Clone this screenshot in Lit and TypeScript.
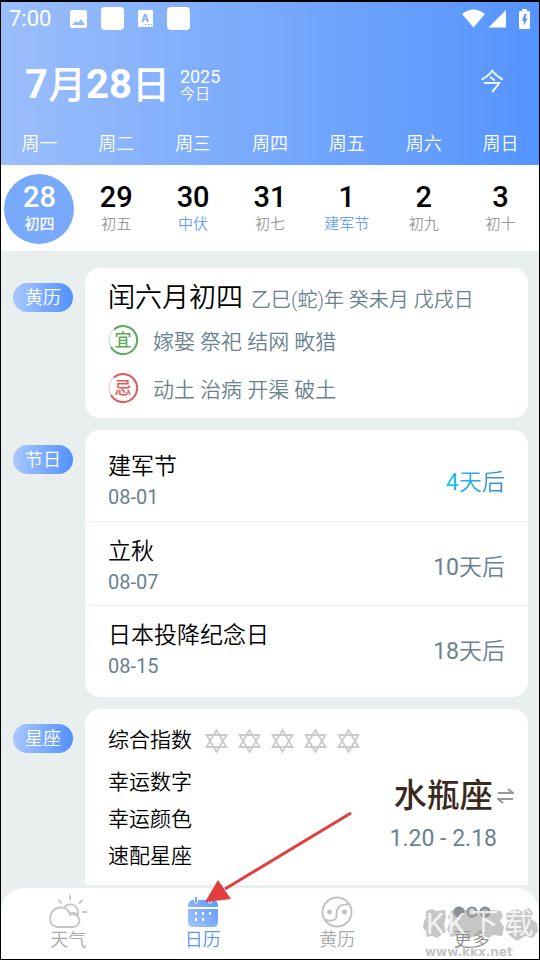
import { LitElement, html, css, svg } from "lit";
import { customElement } from "lit/decorators.js";
import { classMap } from "lit/directives/class-map.js";

interface Day { week: string; num: string; lunar: string; mark?: boolean; selected?: boolean }

const DAYS: Day[] = [
  { week: "周一", num: "28", lunar: "初四", selected: true },
  { week: "周二", num: "29", lunar: "初五" },
  { week: "周三", num: "30", lunar: "中伏", mark: true },
  { week: "周四", num: "31", lunar: "初七" },
  { week: "周五", num: "1", lunar: "建军节", mark: true },
  { week: "周六", num: "2", lunar: "初九" },
  { week: "周日", num: "3", lunar: "初十" },
];

const FESTIVALS = [
  { name: "建军节", date: "08-01", days: 4 },
  { name: "立秋", date: "08-07", days: 10 },
  { name: "日本投降纪念日", date: "08-15", days: 18 },
];

const base = css`
  :host {
    box-sizing: border-box;
    font-family: Roboto, "Noto Sans CJK SC", sans-serif;
    font-weight: 350;
  }
  * { box-sizing: border-box; }
  svg { display: block; }
  h1, h2, h3, p, ul { margin: 0; padding: 0; font-weight: inherit; }
  button {
    border: 0; padding: 0; background: none; color: inherit;
    font-family: inherit; font-weight: inherit; cursor: pointer;
  }
`;

@customElement("status-bar")
export class StatusBar extends LitElement {
  static styles = [base, css`
    :host { display: flex; align-items: center; height: 33px; padding: 0 9px 0 8px; color: #fff; }
    .time { font-size: 22px; line-height: 32px; width: 61px; font-weight: 400; }
    .left { display: flex; align-items: center; flex: 1; gap: 14px; }
    .app { width: 23px; height: 23px; border-radius: 4px; background: #fff; }
    .right { display: flex; align-items: center; }
    .battery { margin-left: 12px; }
  `];
  render() {
    return html`
      <span class="time">7:00</span>
      <div class="left">
        <svg width="17" height="18" viewBox="0 0 17 18"><path fill="#fff" fill-rule="evenodd" d="M2 0H15Q17 0 17 2V16Q17 18 15 18H2Q0 18 0 16V2Q0 0 2 0ZM2 15H15L11 9L8 13L6 11Z"/></svg>
        <span class="app"></span>
        <svg width="15" height="17" viewBox="0 0 15 17"><path fill="#fff" fill-rule="evenodd" d="M1 0H14Q15 0 15 1V16Q15 17 14 17H1Q0 17 0 16V1Q0 0 1 0ZM6 4L3.500 12H5.500L6 10H8.500L9 12H11L8.500 4ZM6.500 8.500L7.200 6L8 8.500ZM7 14V15.200H8.500V14ZM10 14V15.200H11.500V14ZM13 14V15.200H14.200V14Z"/></svg>
        <span class="app"></span>
      </div>
      <div class="right">
        <svg width="23" height="19" viewBox="0 0 23 19"><path fill="#fff" d="M0 5Q11.500 -4 23 5L11.500 18.500Z"/></svg>
        <svg width="22" height="19" viewBox="0 0 22 19"><path fill="#fff" d="M21 1V18.500H3.500Z"/></svg>
        <svg class="battery" width="11" height="20" viewBox="0 0 11 20"><path fill="#fff" fill-rule="evenodd" d="M3 0H8V2H10Q11 2 11 3V19Q11 20 10 20H1Q0 20 0 19V3Q0 2 1 2H3ZM5.500 5L3 12H5L4.500 17L8.500 9.500H6.500L7.500 5Z"/></svg>
      </div>`;
  }
}

@customElement("calendar-head")
export class CalendarHead extends LitElement {
  static styles = [base, css`
    :host { display: block; }
    .top { background: linear-gradient(90deg, #9bbefb, #76a8fc 52%, #5594fe); color: #fff; }
    .title { display: flex; align-items: center; height: 96px; padding: 4px 35px 0 24px; }
    h1 { font-size: 40px; line-height: 48px; font-weight: 700; }
    .cjk { font-size: 38px; font-weight: 500; }
    .year { flex: 1; padding-left: 10px; font-size: 18px; line-height: 18px; font-weight: 400; }
    .year small { display: block; font-size: 15px; line-height: 16px; font-weight: 350; }
    .today { font-size: 24px; line-height: 32px; margin-bottom: 6px; }
    .week { display: grid; grid-template-columns: repeat(7, 1fr); padding-bottom: 8px; }
    .week span { text-align: center; font-size: 18px; line-height: 26px; }
    .strip { display: grid; grid-template-columns: repeat(7, 1fr); padding: 9px 0 7px; background: #fff; }
    .day {
      justify-self: center; width: 70px; height: 70px; border-radius: 35px;
      display: flex; flex-direction: column; align-items: center; padding-top: 6px;
    }
    .num { font-size: 29px; line-height: 34px; font-weight: 500; }
    .lunar { font-size: 15px; line-height: 20px; color: #9a9a9a; }
    .mark .lunar { color: #6aa0fc; }
    .selected { background: #78a9fa; color: #fff; }
    .selected .lunar { color: #fff; font-weight: 500; }
  `];
  render() {
    return html`
      <div class="top">
        <status-bar></status-bar>
        <div class="title">
          <h1>7<span class="cjk">月</span>28<span class="cjk">日</span></h1>
          <p class="year">2025<small>今日</small></p>
          <button class="today">今</button>
        </div>
        <div class="week">${DAYS.map((d) => html`<span>${d.week}</span>`)}</div>
      </div>
      <div class="strip">
        ${DAYS.map((d) => html`
          <button class=${classMap({ day: true, mark: !!d.mark, selected: !!d.selected })}>
            <span class="num">${d.num}</span><span class="lunar">${d.lunar}</span>
          </button>`)}
      </div>`;
  }
}

@customElement("info-section")
export class InfoSection extends LitElement {
  static properties = { label: { type: String } };
  declare label: string;
  static styles = [base, css`
    :host { display: grid; grid-template-columns: 60px 1fr; column-gap: 12px; align-items: start; }
    h2 {
      margin-top: 15px; border-radius: 15px; text-align: center; color: #fff;
      font-size: 18px; line-height: 29px;
      background: linear-gradient(90deg, #a9c8fe, #5290fd);
    }
    .card { background: #fff; border-radius: 15px; }
  `];
  render() {
    return html`<h2>${this.label}</h2><div class="card"><slot></slot></div>`;
  }
}

@customElement("tab-bar")
export class TabBar extends LitElement {
  static styles = [base, css`
    :host {
      display: grid; grid-template-columns: repeat(4, 1fr); height: 71px;
      background: #fff; border-radius: 24px 24px 0 0;
    }
    button {
      display: flex; flex-direction: column; align-items: center; padding-top: 6px;
      font-size: 18px; line-height: 24px; color: #aaa;
    }
    .on { color: #5b95fb; }
    .more { color: #8c8c8c; }
  `];
  render() {
    return html`
      <button>
        <svg width="40" height="34" viewBox="0 0 40 34" fill="none" stroke="#c4c4c4" stroke-width="1.800" stroke-linecap="round">
          <path d="M9 33Q2 32 2 24Q3 14.500 12 13.500Q19.500 13 22 20.500Q30 19 31.500 26Q31.500 32 25 33Z"/>
          <path d="M16.500 13.500Q19 10 24 10.500Q31 12.500 30 21.500M22 20.500Q24.500 17 29 20"/>
          <path d="M22 1.500V5M11 6.500L13 9M34 6.500L31.500 9M35 18H38.500"/>
        </svg>天气
      </button>
      <button class="on">
        <svg width="32" height="34" viewBox="0 0 32 34">
          <defs><linearGradient id="g" x1="0" y1="1" x2="1" y2="0"><stop offset="0" stop-color="#a6c6ff"/><stop offset="1" stop-color="#5794fd"/></linearGradient></defs>
          <path fill="url(#g)" d="M1 15H31V28Q31 33 26 33H6Q1 33 1 28ZM1 13Q1 6 6 6H7V8Q9 12 11 8V6H21V8Q23 12 25 8V6H26Q31 6 31 13ZM8 3H10V9H8ZM22 3H24V9H22Z"/>
          <path fill="#fff" d="M8 18h2v3h-2zM15 18h2v3h-2zM22 18h2v3h-2zM8 24h2v3h-2zM15 24h2v3h-2z"/>
        </svg>日历
      </button>
      <button>
        <svg width="32" height="34" viewBox="0 0 32 34" fill="none" stroke="#bfbfbf" stroke-width="1.800">
          <circle cx="16" cy="18" r="14.500"/>
          <path d="M4.500 25.500Q8 27 11 26.500C18 25.500 14.500 20 16 16Q18 10 27.500 10.500"/>
          <circle cx="8.500" cy="18" r="2.400" fill="#bfbfbf" stroke="none"/><circle cx="23.500" cy="18" r="2.400" fill="#bfbfbf" stroke="none"/>
        </svg>黄历
      </button>
      <button class="more">
        <svg width="40" height="34" viewBox="0 0 40 34" fill="none" stroke="#7f878f" stroke-width="2">
          <circle cx="7" cy="18" r="4.500" fill="#80878e"/><circle cx="20" cy="18" r="4.500"/><circle cx="33" cy="18" r="4.500" fill="#a4a9ae"/>
          <path d="M25 18H29"/>
        </svg>更多
      </button>`;
  }
}

const star = svg`<svg width="25" height="26" viewBox="0 0 25 26" fill="none" stroke="#cbcbcb" stroke-width="1.800"><path d="M12.500 2L22.500 19H2.500ZM12.500 24L2.500 7H22.500Z"/></svg>`;

@customElement("app-root")
export class AppRoot extends LitElement {
  static styles = [base, css`
    :host {
      display: flex; flex-direction: column; position: relative; height: 100vh; overflow: hidden;
      background: #e9eeee; color: #000;
      border: 1px solid #000; border-top-width: 2px;
    }
    calendar-head, tab-bar { flex: none; }
    main {
      flex: 1; min-height: 0; overflow-y: auto; scrollbar-width: none;
      display: flex; flex-direction: column; gap: 12px;
      padding: 17px 11px 0 12px; margin-bottom: 3px;
    }
    info-section { flex: none; }
    .almanac { padding: 12px 23px 6px; }
    .lunar { display: flex; align-items: baseline; gap: 8px; }
    .lunar h3 { font-size: 27px; line-height: 36px; }
    .lunar p { font-size: 20px; color: #6a8290; }
    .row { display: flex; align-items: center; gap: 15px; height: 48px; font-size: 21px; color: #6a8290; }
    .seal { display: grid; place-items: center; width: 30px; height: 30px; flex: none; font-size: 17px; line-height: 28px; font-weight: 500; }
    .seal > * { grid-area: 1 / 1; }
    .good { color: #5fa95c; }
    .bad { color: #e05a5c; }
    ul { list-style: none; padding: 7px 0 8px; }
    li { display: flex; align-items: center; height: 84px; padding: 0 23px; }
    li + li { border-top: 1px solid #f0f0f0; }
    .event { flex: 1; padding-top: 4px; }
    .event h3 { font-size: 23px; line-height: 32px; }
    .event p { font-size: 20px; line-height: 28px; font-weight: 400; color: #6a8290; }
    .left { font-size: 23px; padding-top: 2px; color: #6a8290; }
    .count, .range { font-weight: 400; }
    .soon { color: transparent; background: linear-gradient(90deg, #14c4f5, #4286d8); background-clip: text; }
    .zodiac { display: flex; justify-content: space-between; padding: 13px 14px 40px 23px; }
    .zodiac p { font-size: 21px; line-height: 37px; }
    .score { display: flex; align-items: center; gap: 12px; margin-bottom: 5px; }
    .stars { display: flex; gap: 8px; }
    .sign {
      display: grid; grid-template-columns: auto auto; align-items: center; align-content: start;
      justify-items: center; padding-top: 50px; color: #6a8290;
    }
    .name { font-size: 33px; line-height: 48px; color: #3a2a1c; font-weight: 500; }
    .range { font-size: 23px; line-height: 38px; }
    .arrow { position: absolute; left: 202px; bottom: 56px; pointer-events: none; }
    .watermark { position: absolute; right: 0; bottom: 0; width: 116px; pointer-events: none; }
    .blobs { opacity: 0.55; }
    .brand {
      position: absolute; inset: 0; display: flex; padding-left: 3px;
      font-size: 29px; line-height: 34px; font-weight: 400; color: rgba(255, 255, 255, 0.8);
    }
    .brand span:nth-child(2) { margin-left: 3px; }
    .brand span:nth-child(3) { margin-left: 4px; }
    .brand span:nth-child(4) { margin-left: 6px; }
    .url {
      font-family: "DejaVu Sans", sans-serif; font-weight: 700; font-size: 12px; line-height: 14px;
      color: #c4c4c4; padding-left: 2px;
    }
  `];

  private seal(tone: string, text: string) {
    return html`<span class="seal ${tone}">
      <svg width="30" height="30" viewBox="0 0 30 30" fill="none" stroke="currentColor">
        <circle cx="15" cy="15" r="14" stroke-width="1.200" opacity="0.35"/>
        <path d="M6 4.500A14 14 0 1 1 3 22" stroke-width="2"/>
      </svg><span>${text}</span></span>`;
  }

  render() {
    return html`
      <calendar-head></calendar-head>
      <main>
        <info-section label="黄历">
          <div class="almanac">
            <div class="lunar"><h3>闰六月初四</h3><p>乙巳(蛇)年 癸未月 戊戌日</p></div>
            <div class="row">${this.seal("good", "宜")}嫁娶 祭祀 结网 畋猎</div>
            <div class="row">${this.seal("bad", "忌")}动土 治病 开渠 破土</div>
          </div>
        </info-section>
        <info-section label="节日">
          <ul>${FESTIVALS.map((f) => html`
            <li><div class="event"><h3>${f.name}</h3><p>${f.date}</p></div>
              <span class=${classMap({ left: true, soon: f.days < 7 })}><span class="count">${f.days}</span>天后</span></li>`)}
          </ul>
        </info-section>
        <info-section label="星座">
          <div class="zodiac">
            <div>
              <div class="score"><p>综合指数</p><div class="stars">${[0, 1, 2, 3, 4].map(() => star)}</div></div>
              <p>幸运数字</p><p>幸运颜色</p><p>速配星座</p>
            </div>
            <button class="sign">
              <span class="name">水瓶座</span>
              <svg width="17" height="16" viewBox="0 0 17 16" fill="none" stroke="#999" stroke-width="2"><path d="M1 5H16L11 1M16 11H1L6 15"/></svg>
              <span class="range">1.20 - 2.18</span>
            </button>
          </div>
        </info-section>
      </main>
      <tab-bar></tab-bar>
      <svg class="arrow" width="150" height="94" viewBox="0 0 150 94">
        <path d="M148 4L22 80" stroke="#e43d3d" stroke-width="3"/>
        <path d="M2 93L15 71L28 90Z" fill="#e43d3d"/>
      </svg>
      <div class="watermark">
        <svg class="blobs" width="116" height="38" viewBox="0 0 116 38" fill="#999">
          <path d="M3 4L9 2L13 4L22 3L23 10L21 18L23 25L18 28L14 31L9 29L4 30L3 24L0 21L1 14L3 11Z"/>
          <path d="M28 4L34 1L44 3L52 2L58 5L68 3L78 4L80 9L77 14L81 20L79 29L70 28L66 31L58 28L50 30L44 32L38 28L28 30L24 22L27 15L25 10Z"/>
          <path d="M84 5L92 2L99 4L106 1L110 6L108 12L114 16L115 24L110 31L102 29L94 34L87 29L82 22L85 15L83 10Z"/>
        </svg>
        <div class="brand"><span>K</span><span>K</span><span>下</span><span>载</span></div>
        <div class="url">www.kkx.net</div>
      </div>`;
  }
}
